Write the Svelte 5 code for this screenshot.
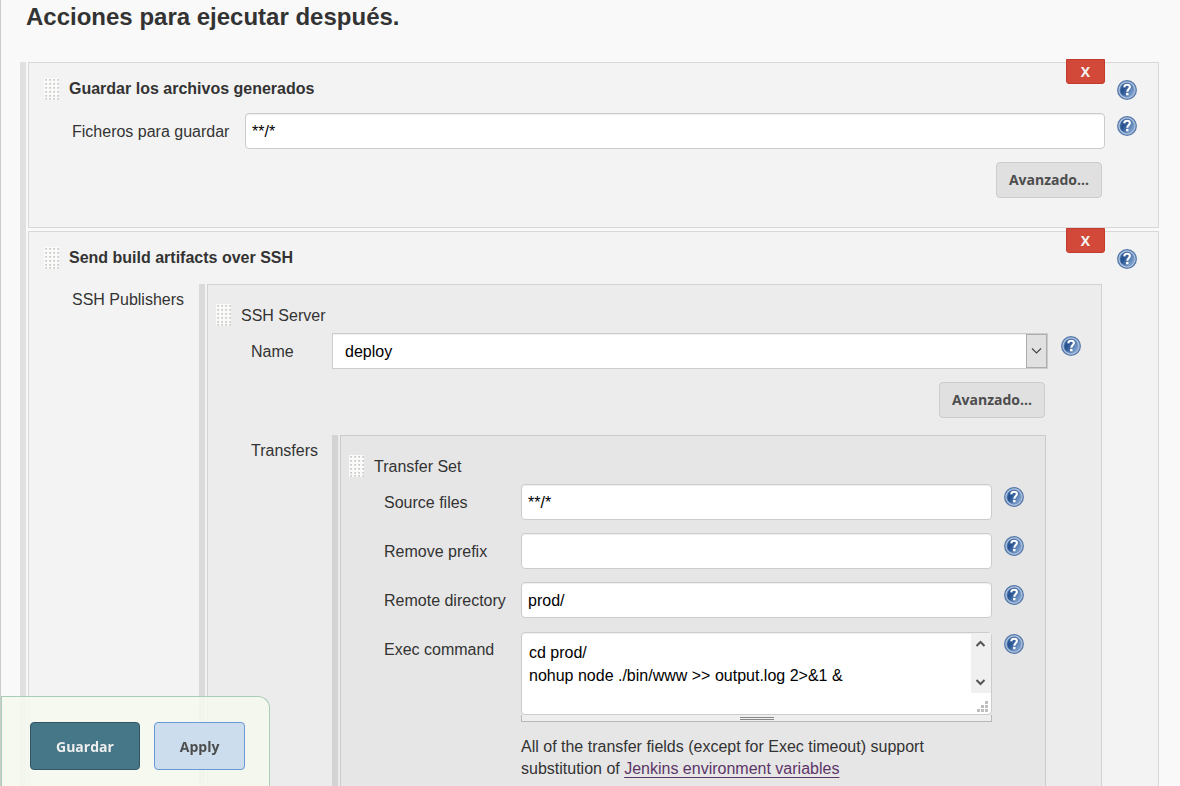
<script>
  let artifacts = $state('**/*');
  let server = $state('deploy');
  let command = $state('cd prod/\nnohup node ./bin/www >> output.log 2>&1 &');
  let fields = $state([
    { id: 'source', label: 'Source files', value: '**/*' },
    { id: 'prefix', label: 'Remove prefix', value: '' },
    { id: 'remote', label: 'Remote directory', value: 'prod/' }
  ]);
</script>

{#snippet help(topic)}
  <button type="button" class="help" aria-label={`Ayuda: ${topic}`}>
    <svg width="20" height="20" viewBox="0 0 20 20" aria-hidden="true">
      <defs>
        <linearGradient id="help-fill" x1="0" y1="0.2" x2="1" y2="0.8">
          <stop offset="0" stop-color="#3c66a3" />
          <stop offset="0.3" stop-color="#24508f" />
          <stop offset="1" stop-color="#8fb0da" />
        </linearGradient>
      </defs>
      <circle cx="10" cy="10" r="9.3" fill="#b4c8e2" stroke="#5578aa" stroke-width="1.3" />
      <circle cx="10" cy="10" r="7.2" fill="url(#help-fill)" stroke="#6f90bd" stroke-width="0.6" />
      <path
        d="M7.2 7.3C7.4 5.5 8.5 4.8 10.1 4.8C11.9 4.8 12.9 5.7 12.9 7.1C12.9 9 10.4 9.1 10.3 11.7"
        fill="none" stroke="#fff" stroke-width="2.1" />
      <rect x="9.1" y="12.9" width="2.4" height="2.4" fill="#fff" />
    </svg>
  </button>
{/snippet}

{#snippet grip()}
  <svg class="grip" width="15" height="22" viewBox="0 0 15 22" aria-hidden="true">
    <rect width="15" height="22" fill="#fafafa" />
    {#each [1, 5, 9, 13] as x}
      {#each [1, 5, 9, 13, 17, 20] as y}
        <rect {x} {y} width="2" height="2" fill="#dcdcd8" />
        <rect x={x + 1} {y} width="1" height="1" fill="#c4c4c0" />
      {/each}
    {/each}
  </svg>
{/snippet}

<main class="page">
  <h1>Acciones para ejecutar después.</h1>

  <div class="group level-1">
    <section class="box">
      <button type="button" class="remove">X</button>
      <header>{@render grip()}<h2>Guardar los archivos generados</h2>{@render help('archivos')}</header>
      <div class="body">
        <div class="row wide-label">
          <label for="artifacts">Ficheros para guardar</label>
          <input id="artifacts" type="text" bind:value={artifacts} />
          {@render help('ficheros')}
        </div>
        <div class="actions outer"><button type="button" class="advanced">Avanzado...</button></div>
      </div>
    </section>

    <section class="box grow">
      <button type="button" class="remove">X</button>
      <header>{@render grip()}<h2>Send build artifacts over SSH</h2>{@render help('SSH')}</header>
      <div class="nest publishers">
        <span class="nest-label">SSH Publishers</span>
        <div class="group level-2">
          <section class="box grow">
            <header>{@render grip()}<h3>SSH Server</h3></header>
            <div class="body">
              <div class="row name-row">
                <label for="server">Name</label>
                <div class="select">
                  <select id="server" bind:value={server}><option>deploy</option></select>
                  <svg width="21" height="34" viewBox="0 0 21 34" aria-hidden="true">
                    <rect x="0.5" y="0.5" width="20" height="33" fill="#e1e1e1" stroke="#adadad" />
                    <path d="M6 14.5L10.5 19L15 14.5" fill="none" stroke="#444" stroke-width="1.1" />
                  </svg>
                </div>
                {@render help('Name')}
              </div>
              <div class="actions inner"><button type="button" class="advanced">Avanzado...</button></div>
            </div>
            <div class="nest transfers">
              <span class="nest-label">Transfers</span>
              <div class="group level-3">
                <section class="box grow">
                  <header>{@render grip()}<h3>Transfer Set</h3></header>
                  <div class="body fields">
                    {#each fields as field (field.id)}
                      <div class="row">
                        <label for={field.id}>{field.label}</label>
                        <input id={field.id} type="text" bind:value={field.value} />
                        {@render help(field.label)}
                      </div>
                    {/each}
                    <div class="row">
                      <label for="command">Exec command</label>
                      <div class="command">
                        <div class="area">
                          <textarea id="command" wrap="off" bind:value={command}></textarea>
                          <svg width="20" height="82" viewBox="0 0 20 82" aria-hidden="true">
                            <rect width="20" height="60" fill="#f0f0f0" />
                            <path d="M5.5 13L9.5 9L13.5 13M5.5 47L9.5 51L13.5 47" fill="none" stroke="#555" stroke-width="2" />
                            <path d="M14 68h3v3h-3zM10 72h3v3h-3zM14 72h3v3h-3zM6 76h3v3h-3zM10 76h3v3h-3zM14 76h3v3h-3z" fill="#bfbfbf" />
                          </svg>
                        </div>
                        <div class="resizer"><i></i></div>
                        <p>
                          All of the transfer fields (except for Exec timeout) support substitution of
                          <a href="#variables">Jenkins environment variables</a>
                        </p>
                      </div>
                      {@render help('Exec command')}
                    </div>
                  </div>
                </section>
              </div>
            </div>
          </section>
        </div>
      </div>
    </section>
  </div>
</main>

<div class="savebar">
  <button type="button" class="save">Guardar</button>
  <button type="button" class="apply">Apply</button>
</div>

<style>
  :global(body) {
    background: #f9f9f9;
  }

  :global(*) {
    box-sizing: border-box;
  }

  .page,
  .savebar,
  input,
  select,
  textarea {
    font-family: "Liberation Sans", Arial, sans-serif;
    font-size: 16px;
  }

  .page {
    display: flex;
    flex-direction: column;
    min-height: 100vh;
    padding: 0 21px 0 19px;
    border-left: 1px solid #ccc;
    color: #333;
  }

  h1,
  h2,
  h3,
  p {
    margin: 0;
  }

  h1 {
    padding: 1px 0 29px 6px;
    font-size: 24px;
    line-height: 32px;
  }

  h2,
  h3 {
    flex: 1;
    font-size: 16px;
    line-height: 22px;
  }

  h3 {
    font-weight: 400;
    line-height: 24px;
  }

  .group {
    display: flex;
    flex: 1;
    flex-direction: column;
    gap: 3px;
    min-width: 0;
    padding-left: 2px;
    border-left: 6px solid var(--stripe);
  }

  .level-1 {
    --stripe: #e0e0e0;
    --fill: #f3f3f3;
    --line: #d8d8d8;
    --top: 15px;
    --grip: 15px;
    --after: 13px;
    --right: 21px;
    --gap: 12px;
  }

  .level-2 {
    --stripe: #dadada;
    --fill: #ececec;
    --line: #d2d2d2;
    --top: 19px;
    --grip: 8px;
    --after: 7px;
    --right: 20px;
    --gap: 13px;
  }

  .level-3 {
    --stripe: #d3d3d3;
    --fill: #e6e6e6;
    --line: #cbcbcb;
    --right: 21px;
    --gap: 12px;
  }

  .box {
    position: relative;
    display: flex;
    flex-direction: column;
    padding-top: var(--top);
    border: 1px solid var(--line);
    background: var(--fill);
  }

  .grow {
    flex: 1;
    border-bottom: 0;
  }

  header {
    display: flex;
    gap: 10px;
    height: 22px;
    margin-bottom: var(--after);
    padding: 0 var(--right) 0 var(--grip);
  }

  header .help {
    margin-top: 2px;
  }

  .grip {
    display: block;
    flex: none;
  }

  .body {
    padding: 0 var(--right) 0 43px;
  }

  .row {
    display: grid;
    grid-template-columns: 137px minmax(0, 1fr) 20px;
    align-items: start;
  }

  .wide-label {
    grid-template-columns: 173px minmax(0, 1fr) 20px;
  }

  .name-row {
    grid-template-columns: 81px minmax(0, 1fr) 20px;
  }

  .row > :nth-child(2) {
    margin-right: var(--gap);
  }

  .fields {
    display: grid;
    gap: 13px;
  }

  label {
    height: 36px;
    line-height: 38px;
  }

  input,
  select,
  textarea {
    height: 36px;
    min-width: 0;
    padding: 2px 6px 0;
    border: 1px solid #ccc;
    border-radius: 4px;
    background: #fff;
    box-shadow: inset 0 1px 1px #0001;
    color: #000;
  }

  .select,
  .area {
    display: grid;
  }

  .select > *,
  .area > * {
    grid-area: 1 / 1;
  }

  .select svg,
  .area svg {
    justify-self: end;
    margin: 1px 1px 0 0;
    pointer-events: none;
    z-index: 1;
  }

  select {
    width: 100%;
    padding: 0 12px;
    border-radius: 0;
    appearance: none;
  }

  .command {
    padding-top: 1px;
  }

  textarea {
    display: block;
    width: 100%;
    height: 83px;
    padding: 8px 7px;
    line-height: 23px;
    overflow: hidden;
    resize: none;
  }

  .resizer {
    display: flex;
    align-items: center;
    justify-content: center;
    height: 7px;
    border: 1px solid #b8b8b8;
    border-top: 0;
    background: #eee;
  }

  .resizer i {
    width: 34px;
    height: 3px;
    border: solid #888;
    border-width: 1px 0;
  }

  p {
    margin-top: 14px;
    line-height: 22px;
  }

  a {
    color: #5c3566;
    text-decoration: underline;
    text-underline-offset: 3px;
  }

  button {
    font: 700 14px "Open Sans", "Noto Sans", sans-serif;
    cursor: pointer;
  }

  .help {
    width: 20px;
    height: 20px;
    margin-top: 3px;
    padding: 0;
    border: 0;
    background: none;
  }

  .help svg {
    display: block;
  }

  .remove {
    position: absolute;
    top: -4px;
    right: 53px;
    width: 39px;
    height: 25px;
    padding: 0;
    border: 1px solid #c23a2b;
    border-radius: 0 0 3px 3px;
    background: #d24939;
    color: #f3f3f3;
  }

  .actions {
    display: flex;
    justify-content: flex-end;
    padding-top: 13px;
  }

  .outer {
    padding-right: 35px;
    padding-bottom: 29px;
  }

  .inner {
    padding-right: 36px;
    padding-bottom: 17px;
  }

  .advanced {
    height: 36px;
    padding: 0 12px 2px;
    border: 1px solid #ccc;
    border-radius: 4px;
    background: #e0e0e0;
    color: #4d4d4d;
  }

  .nest {
    display: flex;
    flex: 1;
    padding-left: 43px;
  }

  .nest-label {
    flex: none;
    line-height: 32px;
  }

  .publishers {
    margin-top: 2px;
    padding-right: 56px;
  }

  .publishers > .nest-label {
    width: 127px;
  }

  .transfers {
    padding-right: 55px;
  }

  .transfers > .nest-label {
    width: 81px;
  }

  .savebar {
    position: fixed;
    bottom: 0;
    left: 1px;
    z-index: 2;
    display: flex;
    gap: 14px;
    padding: 25px 24px 16px 28px;
    border: 1px solid #a8cdb9;
    border-bottom: 0;
    border-radius: 0 12px 0 0;
    background: rgba(245, 249, 238, 0.85);
  }

  .savebar button {
    height: 48px;
    padding: 0 25px;
    border-radius: 4px;
  }

  .save {
    border: 1px solid #335665;
    background: #457788;
    color: #eee;
  }

  .apply {
    border: 1px solid #6898d8;
    background: #ccdded;
    color: #4d4d4d;
  }
</style>
